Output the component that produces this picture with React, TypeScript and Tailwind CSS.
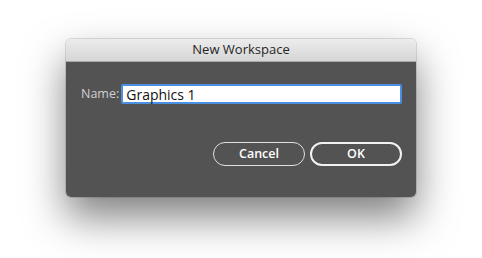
export default function App() {
  return (
    <div className="w-[482px] h-[258px] bg-white flex justify-center pt-[39px] overflow-hidden">
      <div
        className="w-[350px] h-[158px] rounded-[5px] overflow-hidden flex flex-col shadow-[0_20px_40px_rgba(0,0,0,0.5),0_0_0_1px_rgba(0,0,0,0.12)]"
        style={{ fontFamily: '"Open Sans", "Liberation Sans", sans-serif' }}
      >
        <div className="h-[23px] shrink-0 bg-gradient-to-b from-[#ececec] to-[#d6d6d6] border-b border-[#a9a9a9] flex items-center justify-center text-[13px] text-[#262626]">
          New Workspace
        </div>
        <div className="flex-1 bg-[#535353] pl-[15px] pr-[14px] pt-[22px] flex flex-col">
          <div className="flex items-center gap-[2px]">
            <span className="text-[12.5px] text-[#d0d0d0]">Name:</span>
            <div className="flex-1 h-[20px] bg-white border-2 border-[#4a90e2] rounded-[2px] flex items-center pl-[3px] text-[14px] text-[#111]">
              Graphics 1
            </div>
          </div>
          <div className="flex justify-end gap-[5px] mt-[38px]">
            <button className="w-[92px] h-[24px] rounded-full border border-[#e0e0e0] text-white text-[12.5px] font-semibold flex items-center justify-center">
              Cancel
            </button>
            <button className="w-[92px] h-[24px] rounded-full border-2 border-[#f2f2f2] text-white text-[12.5px] font-semibold flex items-center justify-center">
              OK
            </button>
          </div>
        </div>
      </div>
    </div>
  );
}
